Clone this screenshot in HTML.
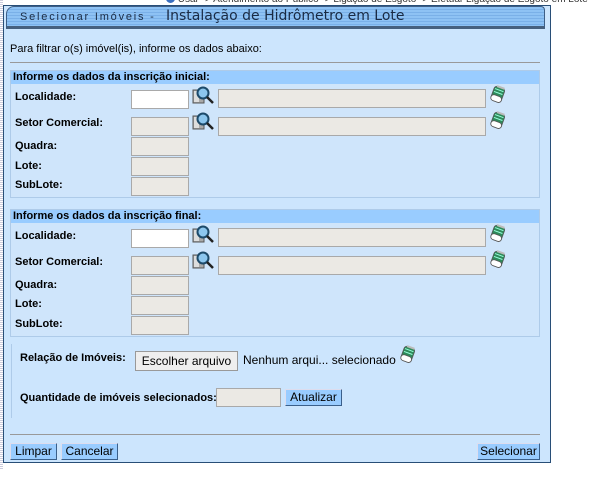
<!DOCTYPE html>
<html><head><meta charset="utf-8"><style>
*{margin:0;padding:0;box-sizing:border-box}
body{width:601px;height:504px;background:#fff;font-family:"Liberation Sans",Arial,sans-serif;position:relative;overflow:hidden}
.a{position:absolute}
.t{font-size:11px;color:#000}
.b{font-weight:bold;font-size:11px;color:#000}
.in{position:absolute;border:1px solid #a9a9a9;background:#ebe9e4;height:19px}
.w{background:#fff}
.btn{position:absolute;background:#99ccff;border:1px solid #3a5f8a;border-top-color:#dde;border-left-color:#dde;font-size:12px;text-align:center;line-height:15px;height:17px}
.sec{position:absolute;left:10px;width:530px;background:#cfe5fb;border:1px solid #aecbe9}
.sh{position:absolute;left:0;top:0;width:100%;height:13px;background:#99ccff;font-weight:bold;font-size:11px;padding-left:2px;line-height:13px}
</style></head><body>
<div class="a" style="left:0;top:0;width:3px;height:470px;background:repeating-linear-gradient(#ccd 0 1px,#fff 1px 2px)"></div>
<div class="a t" style="left:166px;top:-6px;font-size:10px;color:#333;white-space:nowrap"><span style="display:inline-block;width:9px;height:9px;border-radius:50%;background:#3a6fc0;vertical-align:-1px"></span> Usar -&gt; Atendimento ao Público -&gt; Ligação de Esgoto -&gt; Efetuar Ligação de Esgoto em Lote</div>
<div class="a" style="left:3px;top:5px;width:548px;height:458px;background:#cce5fd;border:1px solid #284e77"></div>
<div class="a" style="left:6px;top:6px;width:539px;height:23px;border-radius:8px 4px 0 0;border:1px solid #3d5e86;border-bottom:3px solid #46607e;background:repeating-linear-gradient(#8ec2f4 0 2px,#7ab0e8 2px 3px)"></div>
<div class="a" style="left:20px;top:11px;font-size:11px;letter-spacing:1.8px;color:#1a2b44;white-space:nowrap">Selecionar Imóveis -</div>
<div class="a" style="left:166px;top:8px;color:#1a2b44;font-family:'DejaVu Sans',sans-serif;font-size:14px">Instalação de Hidrômetro em Lote</div>
<div class="a t" style="left:10px;top:43px">Para filtrar o(s) imóvel(is), informe os dados abaixo:</div>
<div class="a" style="left:10px;top:62px;width:530px;height:1px;background:#999"></div>

<div class="sec" style="top:70px;height:128px"><div class="sh">Informe os dados da inscrição inicial:</div></div>
<div class="a b" style="left:15px;top:91px">Localidade:</div>
<div class="a b" style="left:15px;top:117px">Setor Comercial:</div>
<div class="a b" style="left:15px;top:140px">Quadra:</div>
<div class="a b" style="left:15px;top:160px">Lote:</div>
<div class="a b" style="left:15px;top:179px">SubLote:</div>
<div class="in w" style="left:131px;top:90px;width:58px"></div>
<div class="in" style="left:131px;top:117px;width:58px"></div>
<div class="in" style="left:131px;top:137px;width:58px"></div>
<div class="in" style="left:131px;top:157px;width:58px"></div>
<div class="in" style="left:131px;top:177px;width:58px"></div>
<div class="in" style="left:218px;top:89px;width:268px"></div>
<div class="in" style="left:218px;top:117px;width:268px"></div>

<div class="sec" style="top:209px;height:128px"><div class="sh">Informe os dados da inscrição final:</div></div>
<div class="a b" style="left:15px;top:230px">Localidade:</div>
<div class="a b" style="left:15px;top:256px">Setor Comercial:</div>
<div class="a b" style="left:15px;top:279px">Quadra:</div>
<div class="a b" style="left:15px;top:298px">Lote:</div>
<div class="a b" style="left:15px;top:318px">SubLote:</div>
<div class="in w" style="left:131px;top:229px;width:58px"></div>
<div class="in" style="left:131px;top:256px;width:58px"></div>
<div class="in" style="left:131px;top:276px;width:58px"></div>
<div class="in" style="left:131px;top:296px;width:58px"></div>
<div class="in" style="left:131px;top:316px;width:58px"></div>
<div class="in" style="left:218px;top:228px;width:268px"></div>
<div class="in" style="left:218px;top:256px;width:268px"></div>

<svg class="a" style="left:0;top:0" width="601" height="504">
<defs>
<g id="m"><rect x="0" y="5" width="11" height="13" fill="#aaa" stroke="#555" stroke-width="1"/><rect x="1" y="6" width="5" height="11" fill="#ddd"/><circle cx="10" cy="8" r="5.5" fill="#8cc6ee" stroke="#1d4a6a" stroke-width="2"/><line x1="14" y1="12" x2="20" y2="18" stroke="#222" stroke-width="2.5"/></g>
<g id="e" transform="rotate(20 8 9)"><rect x="2" y="1" width="11" height="15" rx="3" fill="#2e8a5a" stroke="#555" stroke-width="0.8"/><rect x="2" y="10" width="11" height="6" rx="3" fill="#fff" stroke="#555" stroke-width="0.8"/><path d="M3 4 L12 4 M3 7 L12 7" stroke="#9fd" stroke-width="1"/><rect x="4" y="0" width="8" height="2" fill="#bbb"/></g>
</defs>
<use href="#m" x="193" y="85"/><use href="#m" x="193" y="111"/>
<use href="#m" x="193" y="224"/><use href="#m" x="193" y="250"/>
<use href="#e" x="490" y="86"/><use href="#e" x="490" y="112"/>
<use href="#e" x="490" y="225"/><use href="#e" x="490" y="251"/>
<use href="#e" x="400" y="346"/>
</svg>

<div class="a" style="left:11px;top:344px;width:1px;height:74px;background:#aecbe9"></div>
<div class="a b" style="left:20px;top:352px">Relação de Imóveis:</div>
<div class="a" style="left:135px;top:351px;width:103px;height:20px;background:#eee;border:1px solid #999;font-size:12px;text-align:center;line-height:18px">Escolher arquivo</div>
<div class="a" style="left:243px;top:353px;font-size:12px">Nenhum arqui... selecionado</div>
<div class="a b" style="left:20px;top:392px">Quantidade de imóveis selecionados:</div>
<div class="in" style="left:216px;top:388px;width:65px"></div>
<div class="btn" style="left:285px;top:389px;width:57px">Atualizar</div>
<div class="a" style="left:10px;top:434px;width:530px;height:1px;background:#999"></div>
<div class="btn" style="left:10px;top:443px;width:47px">Limpar</div>
<div class="btn" style="left:61px;top:443px;width:57px">Cancelar</div>
<div class="btn" style="left:477px;top:443px;width:63px">Selecionar</div>
</body></html>
